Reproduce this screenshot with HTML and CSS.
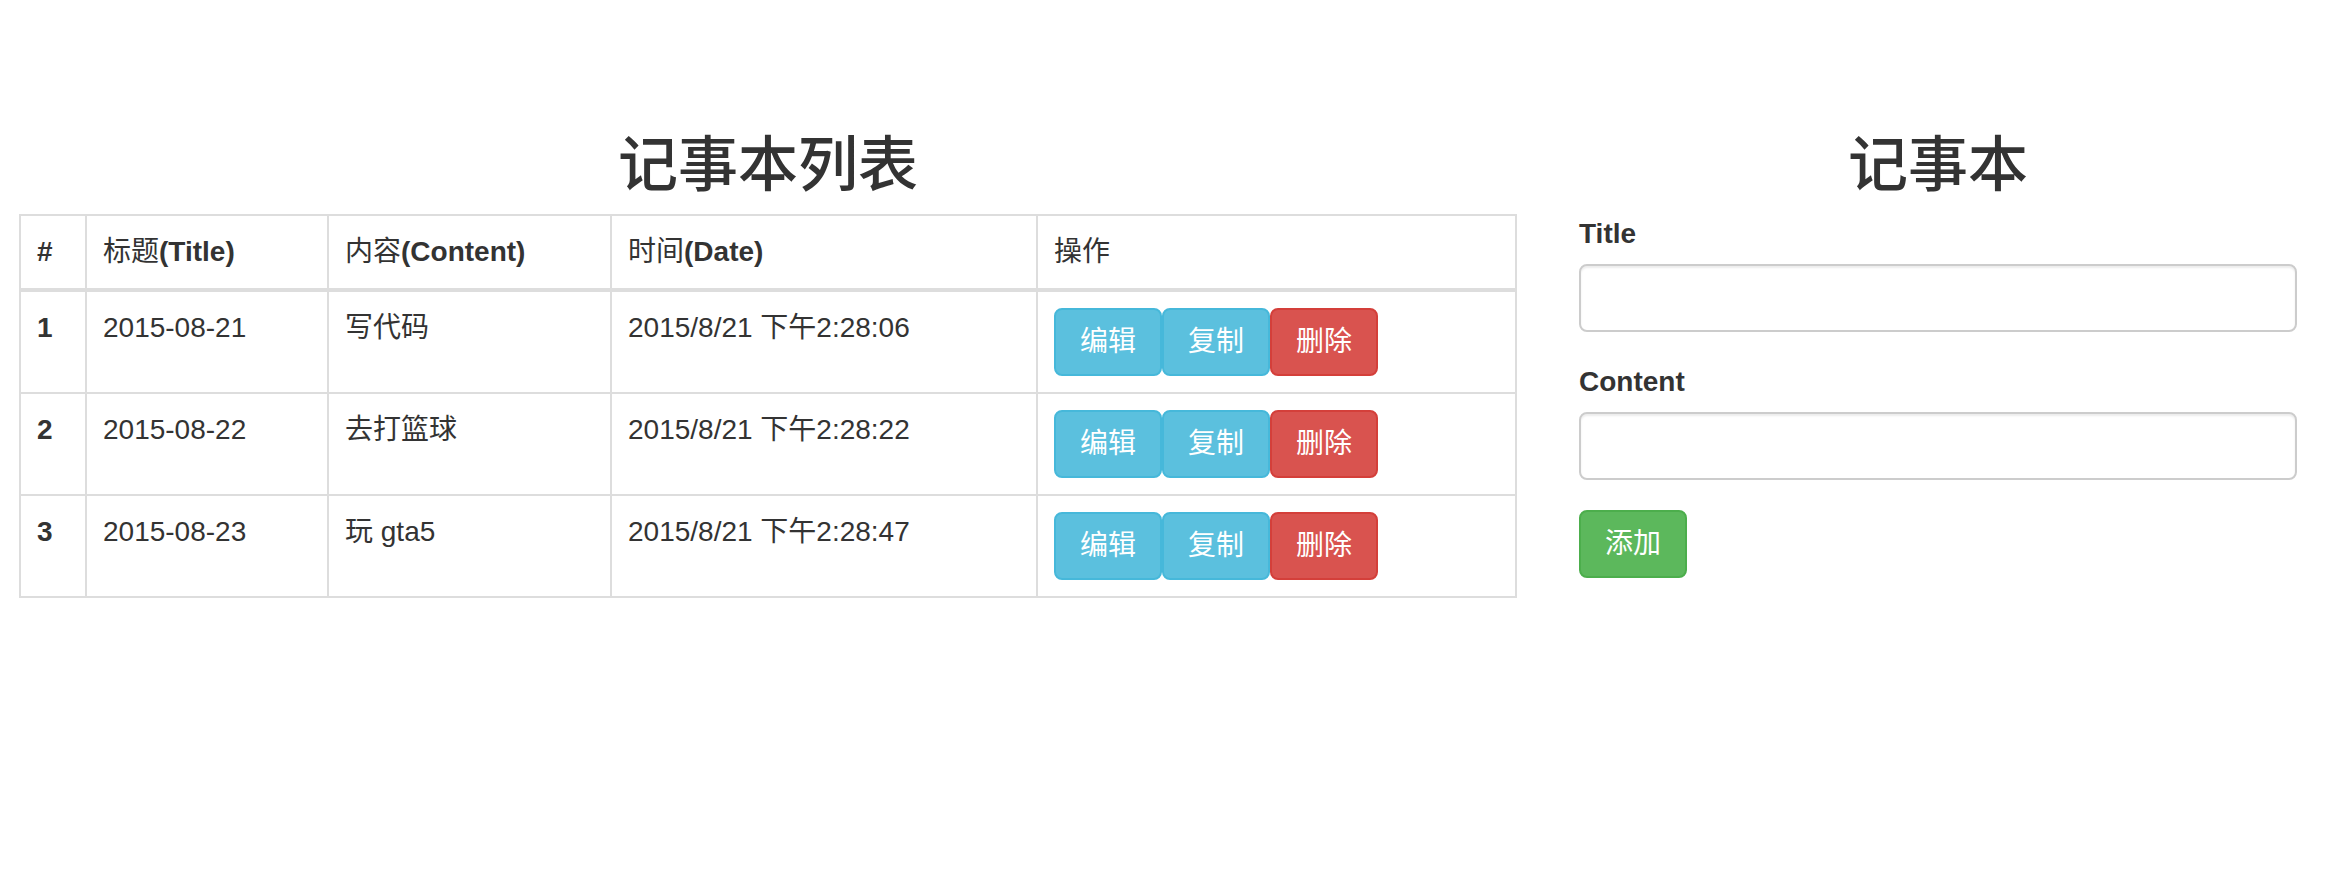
FILE: index.html
```html
<!DOCTYPE html>
<html lang="zh-CN">
<head>
<meta charset="utf-8">
<title>记事本</title>
<link rel="stylesheet" href="styles.css">
</head>
<body>
<div class="page">
  <section class="list">
    <h2 class="heading">记事本列表</h2>
    <table class="notes">
      <colgroup>
        <col class="c-num"><col class="c-title"><col class="c-content"><col class="c-date"><col>
      </colgroup>
      <thead>
        <tr><th>#</th><th><span class="cjk">标题</span>(Title)</th><th><span class="cjk">内容</span>(Content)</th><th><span class="cjk">时间</span>(Date)</th><th><span class="cjk">操作</span></th></tr>
      </thead>
      <tbody>
        <tr>
          <th>1</th><td>2015-08-21</td><td>写代码</td><td>2015/8/21 下午2:28:06</td>
          <td><div class="actions"><button class="btn btn-info">编辑</button><button class="btn btn-info">复制</button><button class="btn btn-danger">删除</button></div></td>
        </tr>
        <tr>
          <th>2</th><td>2015-08-22</td><td>去打篮球</td><td>2015/8/21 下午2:28:22</td>
          <td><div class="actions"><button class="btn btn-info">编辑</button><button class="btn btn-info">复制</button><button class="btn btn-danger">删除</button></div></td>
        </tr>
        <tr>
          <th>3</th><td>2015-08-23</td><td>玩 gta5</td><td>2015/8/21 下午2:28:47</td>
          <td><div class="actions"><button class="btn btn-info">编辑</button><button class="btn btn-info">复制</button><button class="btn btn-danger">删除</button></div></td>
        </tr>
      </tbody>
    </table>
  </section>
  <section class="editor">
    <h2 class="heading">记事本</h2>
    <form class="form">
      <div class="form-group">
        <label class="label" for="title">Title</label>
        <input class="input" id="title" type="text">
      </div>
      <div class="form-group">
        <label class="label" for="content">Content</label>
        <input class="input" id="content" type="text">
      </div>
      <button class="btn btn-success" type="button">添加</button>
    </form>
  </section>
</div>
</body>
</html>
```
FILE: styles.css
```css
* { box-sizing: border-box; }

html, body {
  margin: 0;
  background: #fff;
}

body {
  font-family: "Liberation Sans", "Noto Sans CJK SC", sans-serif;
  font-size: 28px;
  line-height: 40px;
  color: #333;
}

.page {
  display: flex;
  gap: 62px;
  padding: 88px 0 0 19px;
}

.list { width: 1498px; flex: none; }
.editor { width: 718px; flex: none; }

.heading {
  margin: 45px 0 15px;
  font-size: 60px;
  line-height: 66px;
  font-weight: 500;
  text-align: center;
}

.notes {
  width: 100%;
  border-collapse: collapse;
  border-spacing: 0;
  border: 2px solid #ddd;
  table-layout: fixed;
}

.c-num { width: 66px; }
.c-title { width: 242px; }
.c-content { width: 283px; }
.c-date { width: 426px; }

.notes th,
.notes td {
  padding: 16px;
  border: 2px solid #ddd;
  text-align: left;
  vertical-align: top;
  white-space: nowrap;
}

.notes th { font-weight: bold; }

.notes .cjk { font-weight: normal; }

.notes thead th {
  border-bottom-width: 4px;
  vertical-align: bottom;
}

.actions { display: flex; }

.btn {
  display: inline-block;
  margin: 0;
  padding: 12px 24px;
  font-family: inherit;
  font-size: 28px;
  line-height: 40px;
  font-weight: normal;
  color: #fff;
  border: 2px solid transparent;
  border-radius: 8px;
  cursor: pointer;
}

.btn-info { background: #5bc0de; border-color: #46b8da; }
.btn-danger { background: #d9534f; border-color: #d43f3a; }
.btn-success { background: #5cb85c; border-color: #4cae4c; }

.form-group { margin-bottom: 30px; }

.label {
  display: inline-block;
  margin-bottom: 10px;
  font-weight: bold;
}

.input {
  display: block;
  width: 100%;
  height: 68px;
  padding: 12px 24px;
  font-family: inherit;
  font-size: 28px;
  color: #555;
  background: #fff;
  border: 2px solid #ccc;
  border-radius: 8px;
  box-shadow: inset 0 2px 2px rgba(0, 0, 0, .075);
}
```
